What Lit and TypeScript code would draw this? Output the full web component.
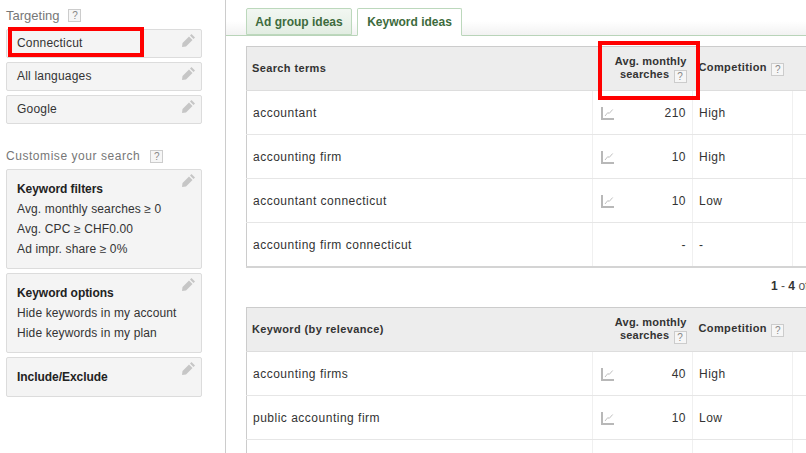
import { LitElement, html, css, svg } from "lit";
import { customElement } from "lit/decorators.js";

const pencil = html`<svg class="pencil" width="13" height="13" viewBox="0 0 13 13"><path d="M9.5 0 13 3.5 11.5 5 8 1.5zM7 2.5 10.5 6 4 12.5 0 13 .5 9z" fill="#c6c6c6"/></svg>`;
const spark = html`<svg class="spark" width="13" height="13" viewBox="0 0 13 13">${svg`<path d="M1 0v12h12" fill="none" stroke="#b8b8b8" stroke-width="2"/><path d="M4 9 6.7 5.7l1.6.6L11.7 2.5" fill="none" stroke="#c0c0c0" stroke-width="1"/>`}</svg>`;
const help = html`<span class="help">?</span>`;

@customElement("app-root")
export class AppRoot extends LitElement {
  static styles = css`
    :host { display: flex; width: 806px; height: 453px; overflow: hidden; position: relative; background: #fff; font-family: "Liberation Sans", Arial, sans-serif; font-size: 12px; color: #333; letter-spacing: .5px; }
    .side { flex: none; box-sizing: border-box; border-right: 1px solid #ccc; padding: 8px 24px 0 6px; height: 453px; width: 226px; }
    .label { color: #777; height: 21px; line-height: 15px; display: flex; align-items: flex-start; gap: 10px; }
    .label .help { margin-top: 1px; }
    .section1 { font-size: 13px; letter-spacing: 0; gap: 9px; }
    .section2 { margin-top: 25px; height: 20px; letter-spacing: .55px; }
    .card { position: relative; box-sizing: border-box; background: #f4f4f4; border: 1px solid #dcdcdc; border-radius: 2px; margin-bottom: 4px; padding: 0 10px; width: 196px; color: #333; letter-spacing: .13px; }
    .card.one { height: 29px; line-height: 26px; letter-spacing: .2px; }
    .card.filters { height: 100px; padding-top: 9px; }
    .card.options { height: 80px; padding-top: 9px; }
    .card.inc { height: 40px; padding-top: 9px; }
    .card b { display: block; line-height: 20px; color: #222; letter-spacing: -.05px; }
    .card div.l { line-height: 20px; }
    .pencil { position: absolute; right: 6px; top: 4px; }
    .help { display: inline-block; box-sizing: border-box; width: 13px; height: 13px; border: 1px solid #ccc; background: #f6f6f6; color: #888; font-size: 10px; line-height: 11px; text-align: center; font-weight: normal; letter-spacing: 0; flex: none; }
    .main { flex: none; width: 580px; }
    .tabs { height: 36px; box-sizing: border-box; padding: 8px 0 0 20px; display: flex; gap: 5px; border-bottom: 1px solid #b9d4b9; background: linear-gradient(#fff 60%, #f2f2f2); }
    .tab { box-sizing: border-box; height: 28px; border: 1px solid #bcd8bc; border-radius: 2px 2px 0 0; color: #3d6b3d; font-weight: bold; text-align: center; line-height: 27px; letter-spacing: 0; }
    .tab.a { width: 106px; height: 27px; background: linear-gradient(#f2f7f2, #e2ede2); }
    .tab.b { width: 105px; background: #fff; border-bottom-color: #fff; }
    .wrap { padding-left: 20px; width: 640px; }
    table { border-collapse: collapse; table-layout: fixed; width: 640px; }
    .t1 { margin-top: 10px; }
    th { background: #ededed; font-weight: bold; border-top: 1px solid #ccc; border-bottom: 1px solid #ddd; text-align: left; font-size: 11px; line-height: 13px; height: 44px; box-sizing: border-box; padding: 0 6px 0 5px; color: #333; letter-spacing: .38px; white-space: nowrap; }
    th:first-child, td:first-child { border-left: 1px solid #ccc; }
    td { height: 44px; box-sizing: border-box; border-bottom: 1px solid #e6e6e6; padding: 0 6px; border-right: 1px solid #f0f0f0; color: #333; }
    td.term { padding-left: 6px; }
    td.num { position: relative; text-align: right; }
    th.num { text-align: right; padding-top: 1px; letter-spacing: .2px; }
    th.num .help { vertical-align: -2px; margin-left: 1px; }
    th.comp { padding-left: 6px; }
    th.comp .help { margin-left: 1px; vertical-align: -2px; }
    .spark { position: absolute; left: 8px; top: 16px; }
    .t2 td, tr.last td { padding-top: 2px; }
    tr.last td { border-bottom: 2px solid #d4d4d4; }
    .pager { height: 39px; line-height: 36px; padding-left: 525px; white-space: nowrap; color: #555; letter-spacing: 0; }
    .pager b { color: #333; }
    .mark { position: absolute; box-sizing: border-box; border: 4px solid #f00; pointer-events: none; }
    .m1 { left: 8px; top: 27px; width: 136px; height: 30px; }
    .m2 { left: 598px; top: 41px; width: 102px; height: 59px; }
  `;

  private head(first: string) {
    return html`<colgroup><col style="width:346px"><col style="width:100px"><col style="width:100px"><col></colgroup>
      <tr><th>${first}</th><th class="num">Avg. monthly<br>searches ${help}</th><th class="comp">Competition ${help}</th><th></th></tr>`;
  }
  private row(term: string, n: string, c: string, last = false, s = true) {
    return html`<tr class=${last ? "last" : ""}><td class="term">${term}</td><td class="num">${s ? spark : ""}${n}</td><td>${c}</td><td></td></tr>`;
  }

  render() {
    return html`
      <div class="side">
        <div class="label section1">Targeting ${help}</div>
        <div class="card one">Connecticut${pencil}</div>
        <div class="card one">All languages${pencil}</div>
        <div class="card one">Google${pencil}</div>
        <div class="label section2">Customise your search ${help}</div>
        <div class="card filters"><b>Keyword filters</b><div class="l">Avg. monthly searches ≥ 0</div><div class="l">Avg. CPC ≥ CHF0.00</div><div class="l">Ad impr. share ≥ 0%</div>${pencil}</div>
        <div class="card options"><b>Keyword options</b><div class="l">Hide keywords in my account</div><div class="l">Hide keywords in my plan</div>${pencil}</div>
        <div class="card inc"><b>Include/Exclude</b>${pencil}</div>
      </div>
      <div class="main">
        <div class="tabs"><div class="tab a">Ad group ideas</div><div class="tab b">Keyword ideas</div></div>
        <div class="wrap">
          <table class="t1">
            ${this.head("Search terms")}
            ${this.row("accountant", "210", "High")}
            ${this.row("accounting firm", "10", "High")}
            ${this.row("accountant connecticut", "10", "Low")}
            ${this.row("accounting firm connecticut", "-", "-", true, false)}
          </table>
          <div class="pager"><b>1</b> - <b>4</b> of 4</div>
          <table class="t2">
            ${this.head("Keyword (by relevance)")}
            ${this.row("accounting firms", "40", "High")}
            ${this.row("public accounting firm", "10", "Low")}
            ${this.row("", "", "", false, false)}
          </table>
        </div>
      </div>
      <div class="mark m1"></div>
      <div class="mark m2"></div>
    `;
  }
}
